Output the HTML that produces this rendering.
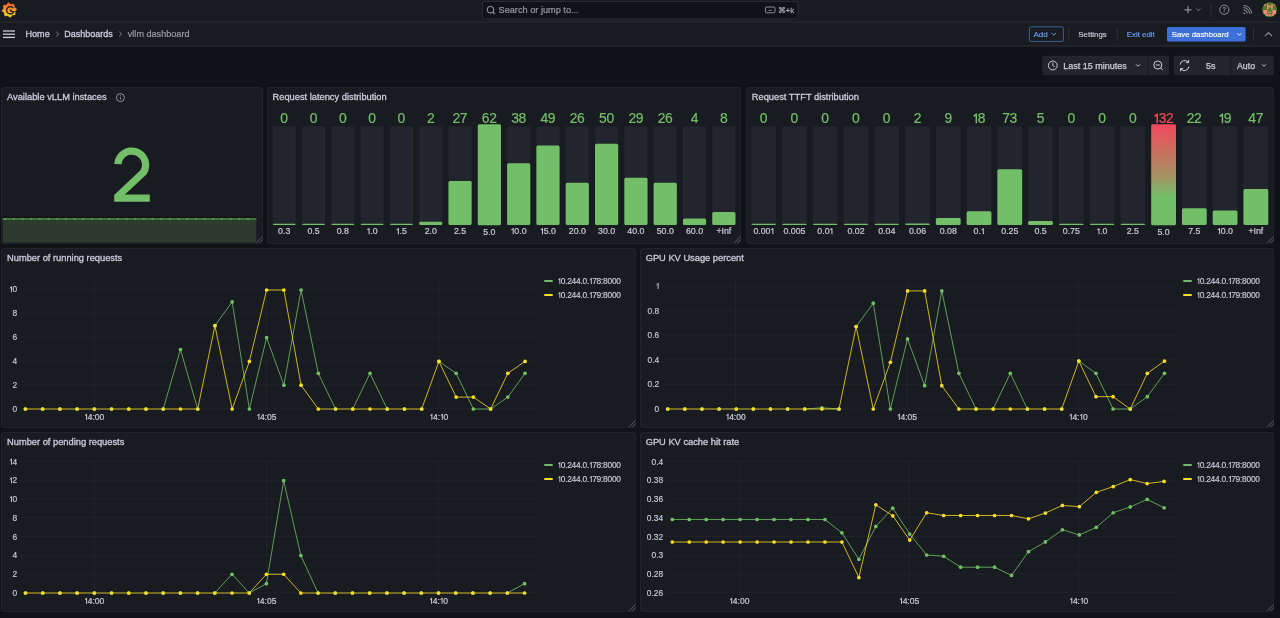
<!DOCTYPE html><html><head><meta charset="utf-8"><style>
html,body{margin:0;padding:0;width:1280px;height:618px;overflow:hidden;background:#111217;font-family:"Liberation Sans", sans-serif;}
.abs{position:absolute;}
.panel{position:absolute;background:#181b1f;border:1px solid rgba(204,204,220,0.05);border-radius:3px;box-sizing:border-box;}
svg text{font-family:"Liberation Sans", sans-serif;}
svg{will-change:transform;}

</style></head><body>
<div class="abs" style="left:0;top:0;width:1280px;height:47px;background:#181b1f"></div>
<div class="abs" style="left:0;top:21px;width:1280px;height:2px;background:rgba(204,204,220,0.05)"></div>
<div class="abs" style="left:0;top:45px;width:1280px;height:2px;background:rgba(204,204,220,0.05)"></div>
<div class="panel" style="left:1px;top:87px;width:262px;height:157px"></div>
<div class="panel" style="left:267px;top:87px;width:474px;height:157px"></div>
<div class="panel" style="left:746px;top:87px;width:528px;height:157px"></div>
<div class="panel" style="left:1px;top:248px;width:635px;height:180px"></div>
<div class="panel" style="left:640px;top:248px;width:634px;height:180px"></div>
<div class="panel" style="left:1px;top:432px;width:635px;height:180px"></div>
<div class="panel" style="left:640px;top:432px;width:634px;height:180px"></div>
<svg class="abs" style="left:0;top:0" width="1280" height="618" viewBox="0 0 1280 618">
<defs><linearGradient id="glogo" x1="0" y1="1" x2="0" y2="0"><stop offset="0" stop-color="#fbe02a"/><stop offset="0.55" stop-color="#f7942b"/><stop offset="1" stop-color="#f05a2a"/></linearGradient>
<linearGradient id="redgrad" x1="0" y1="0" x2="0" y2="1"><stop offset="0" stop-color="#f2495c"/><stop offset="0.5" stop-color="#a89063"/><stop offset="0.72" stop-color="#73bf69"/><stop offset="1" stop-color="#73bf69"/></linearGradient></defs>
<polygon points="8.40,2.66 9.78,3.52 10.80,4.60 12.23,4.20 13.86,4.17 14.22,5.76 14.17,7.24 15.47,7.96 16.64,9.10 15.78,10.48 14.70,11.50 15.10,12.93 15.13,14.56 13.54,14.92 12.06,14.87 11.34,16.17 10.20,17.34 8.82,16.48 7.80,15.40 6.37,15.80 4.74,15.83 4.38,14.24 4.43,12.76 3.13,12.04 1.96,10.90 2.82,9.52 3.90,8.50 3.50,7.07 3.47,5.44 5.06,5.08 6.54,5.13 7.26,3.83" fill="url(#glogo)" stroke="url(#glogo)" stroke-width="0.6" stroke-linejoin="round"/>
<path d="M13.33,8.18 A3.7,3.7 0 1 0 13.65,11.86 Q12.3,11.7 11.0,10.7" stroke="#1a1c20" stroke-width="1.3" fill="none"/>
<circle cx="10.6" cy="10.5" r="0.95" fill="#1a1c20"/>
<rect x="482.5" y="1.5" width="315.5" height="17.5" rx="2" fill="#111217" stroke="rgba(204,204,220,0.12)" stroke-width="1"/>
<circle cx="490.5" cy="9.7" r="3.2" stroke="rgba(204,204,220,0.65)" stroke-width="1.1" fill="none"/><line x1="492.8" y1="12" x2="495" y2="14.2" stroke="rgba(204,204,220,0.65)" stroke-width="1.1"/>
<text x="498.5" y="13.3" font-size="9.2" fill="rgba(204,204,220,0.65)" font-weight="normal" text-anchor="start" stroke="rgba(204,204,220,0.65)" stroke-width="0.2" >Search or jump to...</text>
<rect x="765.5" y="7" width="9.5" height="5.8" rx="1.2" stroke="rgba(204,204,220,0.65)" stroke-width="1" fill="none"/><line x1="768.5" y1="10.4" x2="772" y2="10.4" stroke="rgba(204,204,220,0.65)" stroke-width="0.8"/>
<text x="777.5" y="13" font-size="8" fill="rgba(204,204,220,0.65)" font-weight="normal" text-anchor="start" stroke="rgba(204,204,220,0.65)" stroke-width="0.3" >⌘+k</text>
<path d="M1188,6.3 V13.3 M1184.5,9.8 H1191.5" stroke="rgba(204,204,220,0.65)" stroke-width="1.2"/>
<path d="M1196.3,8.6 L1198.3,10.6 L1200.3,8.6" stroke="rgba(204,204,220,0.65)" stroke-width="0.9" fill="none"/>
<line x1="1211" y1="3" x2="1211" y2="17" stroke="rgba(204,204,220,0.12)" stroke-width="1"/>
<circle cx="1224.3" cy="9.7" r="4.6" stroke="rgba(204,204,220,0.65)" stroke-width="1" fill="none"/>
<text x="1224.3" y="12.2" font-size="6.5" fill="rgba(204,204,220,0.65)" font-weight="bold" text-anchor="middle" >?</text>
<circle cx="1244.3" cy="13.3" r="0.9" fill="rgba(204,204,220,0.65)"/><path d="M1243.5,9.8 a3.8,3.8 0 0 1 3.8,3.8 M1243.5,7.6 a6,6 0 0 1 6,6 M1243.5,5.5 a8,8 0 0 1 8,8" stroke="rgba(204,204,220,0.65)" stroke-width="1" fill="none"/>
<clipPath id="avc"><circle cx="1269.6" cy="9.7" r="7.4"/></clipPath>
<g clip-path="url(#avc)"><rect x="1262" y="2" width="16" height="16" fill="#4b7d22"/><rect x="1264" y="3.9" width="1.8" height="1.8" fill="#f2877f"/><rect x="1274" y="3.9" width="1.8" height="1.8" fill="#f2877f"/><rect x="1267" y="3.9" width="1.4" height="5.8" fill="#f2877f"/><rect x="1271.4" y="3.9" width="1.4" height="5.8" fill="#f2877f"/><rect x="1267" y="5.7" width="5.8" height="1.6" fill="#f2877f"/><rect x="1263.6" y="10" width="3.7" height="4.1" fill="#f2877f"/><rect x="1265.8" y="14.1" width="2.3" height="1.8" fill="#f2877f"/><rect x="1272.4" y="10" width="3.6" height="4.1" fill="#f2877f"/><rect x="1271.5" y="14.1" width="2.3" height="1.8" fill="#f2877f"/><rect x="1268.3" y="11.6" width="2.8" height="1.3" fill="#f2877f"/><rect x="1268.3" y="14.2" width="2.8" height="1.6" fill="#f2877f"/></g>
<line x1="3" y1="31" x2="15" y2="31" stroke="#ccccdc" stroke-width="1.3"/>
<line x1="3" y1="34.2" x2="15" y2="34.2" stroke="#ccccdc" stroke-width="1.3"/>
<line x1="3" y1="37.4" x2="15" y2="37.4" stroke="#ccccdc" stroke-width="1.3"/>
<text x="25.5" y="37.3" font-size="9.1" fill="#ccccdc" font-weight="normal" text-anchor="start" stroke="#ccccdc" stroke-width="0.3" >Home</text>
<path d="M56.3,31.8 L58.6,34 L56.3,36.2" stroke="rgba(204,204,220,0.65)" stroke-width="0.9" fill="none"/>
<text x="64.3" y="37.3" font-size="9.0" fill="#ccccdc" font-weight="normal" text-anchor="start" stroke="#ccccdc" stroke-width="0.3" >Dashboards</text>
<path d="M119.3,31.8 L121.6,34 L119.3,36.2" stroke="rgba(204,204,220,0.65)" stroke-width="0.9" fill="none"/>
<text x="127.8" y="37.3" font-size="9.1" fill="rgba(204,204,220,0.65)" font-weight="normal" text-anchor="start" stroke="rgba(204,204,220,0.65)" stroke-width="0.2" >vllm dashboard</text>
<rect x="1029.4" y="26.8" width="34" height="14.6" rx="1.5" fill="none" stroke="#3d5f94" stroke-width="1"/>
<text x="1033.5" y="36.6" font-size="8.0" fill="#6e9fff" font-weight="normal" text-anchor="start" stroke="#6e9fff" stroke-width="0.15" >Add</text>
<path d="M1051.6,33 L1053.8,35.2 L1056,33" stroke="#6e9fff" stroke-width="0.9" fill="none"/>
<line x1="1068.8" y1="27" x2="1068.8" y2="41" stroke="rgba(204,204,220,0.12)"/>
<text x="1078.3" y="36.5" font-size="7.9" fill="#ccccdc" font-weight="normal" text-anchor="start" stroke="#ccccdc" stroke-width="0.15" >Settings</text>
<line x1="1117.3" y1="27" x2="1117.3" y2="41" stroke="rgba(204,204,220,0.12)"/>
<text x="1126.7" y="36.6" font-size="7.9" fill="#6e9fff" font-weight="normal" text-anchor="start" stroke="#6e9fff" stroke-width="0.15" >Exit edit</text>
<rect x="1167" y="27" width="78.6" height="14.4" rx="1.5" fill="#3d71d9"/>
<text x="1171.8" y="36.6" font-size="7.8" fill="#ffffff" font-weight="normal" text-anchor="start" stroke="#ffffff" stroke-width="0.15" >Save dashboard</text>
<path d="M1237.4,33.4 L1239.3,35.3 L1241.2,33.4" stroke="#ffffff" stroke-width="0.9" fill="none"/>
<line x1="1253.5" y1="27" x2="1253.5" y2="41" stroke="rgba(204,204,220,0.12)"/>
<path d="M1265,36 L1268.5,32.5 L1272,36" stroke="rgba(204,204,220,0.65)" stroke-width="1.1" fill="none"/>
<rect x="1042.3" y="55.7" width="126.7" height="19.6" rx="2" fill="#22252b"/>
<line x1="1148.3" y1="55.7" x2="1148.3" y2="75.3" stroke="#181b1f" stroke-width="1"/>
<circle cx="1052.8" cy="65.5" r="4.4" stroke="#ccccdc" stroke-width="1" fill="none"/><path d="M1052.8,62.6 V65.5 L1054.8,66.8" stroke="#ccccdc" stroke-width="0.9" fill="none"/>
<text x="1063.3" y="69" font-size="9.0" fill="#ccccdc" font-weight="normal" text-anchor="start" stroke="#ccccdc" stroke-width="0.25" >Last 15 minutes</text>
<path d="M1136,64.3 L1138,66.3 L1140,64.3" stroke="#ccccdc" stroke-width="0.9" fill="none"/>
<circle cx="1157.8" cy="65" r="4" stroke="#ccccdc" stroke-width="1" fill="none"/><line x1="1160.6" y1="67.8" x2="1162.8" y2="70" stroke="#ccccdc" stroke-width="1"/><line x1="1155.8" y1="65" x2="1159.8" y2="65" stroke="#ccccdc" stroke-width="1"/>
<rect x="1173.8" y="55.7" width="99.9" height="19.6" rx="2" fill="#22252b"/>
<line x1="1231" y1="55.7" x2="1231" y2="75.3" stroke="#181b1f" stroke-width="1"/>
<path d="M1180.2,64.6 A4.6,4.6 0 0 1 1188.3,62.2 M1188.9,66.6 A4.6,4.6 0 0 1 1180.8,69 M1188.6,59.9 V62.6 H1185.9 M1180.5,71.3 V68.6 H1183.2" stroke="#ccccdc" stroke-width="1" fill="none"/>
<text x="1210.8" y="69" font-size="9.0" fill="#ccccdc" font-weight="normal" text-anchor="middle" stroke="#ccccdc" stroke-width="0.25" >5s</text>
<text x="1237" y="69" font-size="8.8" fill="#ccccdc" font-weight="normal" text-anchor="start" stroke="#ccccdc" stroke-width="0.25" >Auto</text>
<path d="M1262,64.3 L1264,66.3 L1266,64.3" stroke="#ccccdc" stroke-width="0.9" fill="none"/>
<path d="M256.30,242.70 L262.50,236.50 M259.40,242.70 L262.70,239.40" stroke="rgba(204,204,220,0.5)" stroke-width="0.7"/>
<path d="M734.30,242.70 L740.50,236.50 M737.40,242.70 L740.70,239.40" stroke="rgba(204,204,220,0.5)" stroke-width="0.7"/>
<path d="M1267.30,242.70 L1273.50,236.50 M1270.40,242.70 L1273.70,239.40" stroke="rgba(204,204,220,0.5)" stroke-width="0.7"/>
<path d="M629.30,426.70 L635.50,420.50 M632.40,426.70 L635.70,423.40" stroke="rgba(204,204,220,0.5)" stroke-width="0.7"/>
<path d="M1267.30,426.70 L1273.50,420.50 M1270.40,426.70 L1273.70,423.40" stroke="rgba(204,204,220,0.5)" stroke-width="0.7"/>
<path d="M629.30,610.70 L635.50,604.50 M632.40,610.70 L635.70,607.40" stroke="rgba(204,204,220,0.5)" stroke-width="0.7"/>
<path d="M1267.30,610.70 L1273.50,604.50 M1270.40,610.70 L1273.70,607.40" stroke="rgba(204,204,220,0.5)" stroke-width="0.7"/>
<text x="7" y="100.3" font-size="9.3" fill="#ccccdc" font-weight="normal" text-anchor="start" stroke="#ccccdc" stroke-width="0.3" >Available vLLM instaces</text>
<circle cx="120.4" cy="97.6" r="4.0" stroke="rgba(204,204,220,0.65)" stroke-width="1" fill="none"/><line x1="120.4" y1="97.3" x2="120.4" y2="99.6" stroke="rgba(204,204,220,0.65)" stroke-width="1"/><circle cx="120.4" cy="95.8" r="0.6" fill="rgba(204,204,220,0.65)"/>
<text x="272.5" y="100.3" font-size="9.3" fill="#ccccdc" font-weight="normal" text-anchor="start" stroke="#ccccdc" stroke-width="0.3" >Request latency distribution</text>
<text x="751.8" y="100.3" font-size="9.3" fill="#ccccdc" font-weight="normal" text-anchor="start" stroke="#ccccdc" stroke-width="0.3" >Request TTFT distribution</text>
<text x="7" y="260.9" font-size="9.3" fill="#ccccdc" font-weight="normal" text-anchor="start" stroke="#ccccdc" stroke-width="0.3" >Number of running requests</text>
<text x="645.7" y="260.9" font-size="9.3" fill="#ccccdc" font-weight="normal" text-anchor="start" stroke="#ccccdc" stroke-width="0.3" >GPU KV Usage percent</text>
<text x="7" y="444.9" font-size="9.3" fill="#ccccdc" font-weight="normal" text-anchor="start" stroke="#ccccdc" stroke-width="0.3" >Number of pending requests</text>
<text x="645.7" y="444.9" font-size="9.3" fill="#ccccdc" font-weight="normal" text-anchor="start" stroke="#ccccdc" stroke-width="0.3" >GPU KV cache hit rate</text>
<rect x="2.7" y="219" width="253.6" height="23.6" fill="#2c3b2e"/>
<line x1="2.7" y1="217.2" x2="256.3" y2="217.2" stroke="rgba(0,0,0,0.35)" stroke-width="1"/>
<line x1="2.7" y1="219" x2="256.3" y2="219" stroke="#44733f" stroke-width="2"/>
<circle cx="5.20" cy="219" r="1.1" fill="#5f9c59"/><circle cx="13.87" cy="219" r="1.1" fill="#5f9c59"/><circle cx="22.54" cy="219" r="1.1" fill="#5f9c59"/><circle cx="31.21" cy="219" r="1.1" fill="#5f9c59"/><circle cx="39.88" cy="219" r="1.1" fill="#5f9c59"/><circle cx="48.55" cy="219" r="1.1" fill="#5f9c59"/><circle cx="57.22" cy="219" r="1.1" fill="#5f9c59"/><circle cx="65.89" cy="219" r="1.1" fill="#5f9c59"/><circle cx="74.56" cy="219" r="1.1" fill="#5f9c59"/><circle cx="83.23" cy="219" r="1.1" fill="#5f9c59"/><circle cx="91.90" cy="219" r="1.1" fill="#5f9c59"/><circle cx="100.57" cy="219" r="1.1" fill="#5f9c59"/><circle cx="109.24" cy="219" r="1.1" fill="#5f9c59"/><circle cx="117.91" cy="219" r="1.1" fill="#5f9c59"/><circle cx="126.58" cy="219" r="1.1" fill="#5f9c59"/><circle cx="135.25" cy="219" r="1.1" fill="#5f9c59"/><circle cx="143.92" cy="219" r="1.1" fill="#5f9c59"/><circle cx="152.59" cy="219" r="1.1" fill="#5f9c59"/><circle cx="161.26" cy="219" r="1.1" fill="#5f9c59"/><circle cx="169.93" cy="219" r="1.1" fill="#5f9c59"/><circle cx="178.60" cy="219" r="1.1" fill="#5f9c59"/><circle cx="187.27" cy="219" r="1.1" fill="#5f9c59"/><circle cx="195.94" cy="219" r="1.1" fill="#5f9c59"/><circle cx="204.61" cy="219" r="1.1" fill="#5f9c59"/><circle cx="213.28" cy="219" r="1.1" fill="#5f9c59"/><circle cx="221.95" cy="219" r="1.1" fill="#5f9c59"/><circle cx="230.62" cy="219" r="1.1" fill="#5f9c59"/><circle cx="239.29" cy="219" r="1.1" fill="#5f9c59"/><circle cx="247.96" cy="219" r="1.1" fill="#5f9c59"/>
<path d="M114.23,163.88 A17.55,17.55 0 1 1 146.63,174.25 L125.0,194.4 L149.8,194.4 L149.8,201.7 L114.2,201.7 L114.2,195.0 L140.40,170.36 A10.2,10.2 0 1 0 121.57,164.33 Z" fill="#73bf69"/>
<rect x="272.60" y="126.3" width="23.2" height="98.60" rx="1.5" fill="#22252d"/>
<rect x="272.60" y="223.70" width="23.2" height="1.20" rx="1.5" fill="#73bf69"/>
<text x="280.33" y="123.2" font-size="13.9" fill="#73bf69" stroke="#73bf69" stroke-width="0.2" letter-spacing="0">0</text>
<text x="278.08" y="234.2" font-size="8.8" fill="#ccccdc" stroke="#ccccdc" stroke-width="0.2" letter-spacing="0.0">0.3</text>
<rect x="301.91" y="126.3" width="23.2" height="98.60" rx="1.5" fill="#22252d"/>
<rect x="301.91" y="223.70" width="23.2" height="1.20" rx="1.5" fill="#73bf69"/>
<text x="309.64" y="123.2" font-size="13.9" fill="#73bf69" stroke="#73bf69" stroke-width="0.2" letter-spacing="0">0</text>
<text x="307.39" y="234.2" font-size="8.8" fill="#ccccdc" stroke="#ccccdc" stroke-width="0.2" letter-spacing="0.0">0.5</text>
<rect x="331.22" y="126.3" width="23.2" height="98.60" rx="1.5" fill="#22252d"/>
<rect x="331.22" y="223.70" width="23.2" height="1.20" rx="1.5" fill="#73bf69"/>
<text x="338.95" y="123.2" font-size="13.9" fill="#73bf69" stroke="#73bf69" stroke-width="0.2" letter-spacing="0">0</text>
<text x="336.70" y="234.2" font-size="8.8" fill="#ccccdc" stroke="#ccccdc" stroke-width="0.2" letter-spacing="0.0">0.8</text>
<rect x="360.53" y="126.3" width="23.2" height="98.60" rx="1.5" fill="#22252d"/>
<rect x="360.53" y="223.70" width="23.2" height="1.20" rx="1.5" fill="#73bf69"/>
<text x="368.26" y="123.2" font-size="13.9" fill="#73bf69" stroke="#73bf69" stroke-width="0.2" letter-spacing="0">0</text>
<path d="M369.08,228.15 V234.20 M369.38,228.35 L367.36,229.91" stroke="#ccccdc" stroke-width="1.02" fill="none"/><text x="370.22" y="234.2" font-size="8.8" fill="#ccccdc" stroke="#ccccdc" stroke-width="0.2" letter-spacing="0.0">.0</text>
<rect x="389.84" y="126.3" width="23.2" height="98.60" rx="1.5" fill="#22252d"/>
<rect x="389.84" y="223.70" width="23.2" height="1.20" rx="1.5" fill="#73bf69"/>
<text x="397.57" y="123.2" font-size="13.9" fill="#73bf69" stroke="#73bf69" stroke-width="0.2" letter-spacing="0">0</text>
<path d="M398.39,228.15 V234.20 M398.69,228.35 L396.67,229.91" stroke="#ccccdc" stroke-width="1.02" fill="none"/><text x="399.53" y="234.2" font-size="8.8" fill="#ccccdc" stroke="#ccccdc" stroke-width="0.2" letter-spacing="0.0">.5</text>
<rect x="419.15" y="126.3" width="23.2" height="98.60" rx="1.5" fill="#22252d"/>
<rect x="419.15" y="221.65" width="23.2" height="3.25" rx="1.5" fill="#73bf69"/>
<text x="426.88" y="123.2" font-size="13.9" fill="#73bf69" stroke="#73bf69" stroke-width="0.2" letter-spacing="0">2</text>
<text x="424.63" y="234.2" font-size="8.8" fill="#ccccdc" stroke="#ccccdc" stroke-width="0.2" letter-spacing="0.0">2.0</text>
<rect x="448.46" y="126.3" width="23.2" height="98.60" rx="1.5" fill="#22252d"/>
<rect x="448.46" y="181.09" width="23.2" height="43.81" rx="1.5" fill="#73bf69"/>
<text x="452.53" y="123.2" font-size="13.9" fill="#73bf69" stroke="#73bf69" stroke-width="0.2" letter-spacing="-0.4">27</text>
<text x="453.94" y="234.2" font-size="8.8" fill="#ccccdc" stroke="#ccccdc" stroke-width="0.2" letter-spacing="0.0">2.5</text>
<rect x="477.77" y="126.3" width="23.2" height="98.60" rx="1.5" fill="#22252d"/>
<rect x="477.77" y="124.30" width="23.2" height="100.90" rx="1.5" fill="#73bf69"/>
<text x="481.84" y="123.2" font-size="13.9" fill="#73bf69" stroke="#73bf69" stroke-width="0.2" letter-spacing="-0.4">62</text>
<text x="483.25" y="234.5" font-size="8.8" fill="#ccccdc" stroke="#ccccdc" stroke-width="0.2" letter-spacing="0.0">5.0</text>
<rect x="507.08" y="126.3" width="23.2" height="98.60" rx="1.5" fill="#22252d"/>
<rect x="507.08" y="163.24" width="23.2" height="61.66" rx="1.5" fill="#73bf69"/>
<text x="511.15" y="123.2" font-size="13.9" fill="#73bf69" stroke="#73bf69" stroke-width="0.2" letter-spacing="-0.4">38</text>
<path d="M513.18,228.15 V234.20 M513.48,228.35 L511.46,229.91" stroke="#ccccdc" stroke-width="1.02" fill="none"/><text x="514.32" y="234.2" font-size="8.8" fill="#ccccdc" stroke="#ccccdc" stroke-width="0.2" letter-spacing="0.0">0.0</text>
<rect x="536.39" y="126.3" width="23.2" height="98.60" rx="1.5" fill="#22252d"/>
<rect x="536.39" y="145.39" width="23.2" height="79.51" rx="1.5" fill="#73bf69"/>
<text x="540.46" y="123.2" font-size="13.9" fill="#73bf69" stroke="#73bf69" stroke-width="0.2" letter-spacing="-0.4">49</text>
<path d="M542.49,228.15 V234.20 M542.79,228.35 L540.77,229.91" stroke="#ccccdc" stroke-width="1.02" fill="none"/><text x="543.63" y="234.2" font-size="8.8" fill="#ccccdc" stroke="#ccccdc" stroke-width="0.2" letter-spacing="0.0">5.0</text>
<rect x="565.70" y="126.3" width="23.2" height="98.60" rx="1.5" fill="#22252d"/>
<rect x="565.70" y="182.71" width="23.2" height="42.19" rx="1.5" fill="#73bf69"/>
<text x="569.77" y="123.2" font-size="13.9" fill="#73bf69" stroke="#73bf69" stroke-width="0.2" letter-spacing="-0.4">26</text>
<text x="568.74" y="234.2" font-size="8.8" fill="#ccccdc" stroke="#ccccdc" stroke-width="0.2" letter-spacing="0.0">20.0</text>
<rect x="595.01" y="126.3" width="23.2" height="98.60" rx="1.5" fill="#22252d"/>
<rect x="595.01" y="143.77" width="23.2" height="81.13" rx="1.5" fill="#73bf69"/>
<text x="599.08" y="123.2" font-size="13.9" fill="#73bf69" stroke="#73bf69" stroke-width="0.2" letter-spacing="-0.4">50</text>
<text x="598.05" y="234.2" font-size="8.8" fill="#ccccdc" stroke="#ccccdc" stroke-width="0.2" letter-spacing="0.0">30.0</text>
<rect x="624.32" y="126.3" width="23.2" height="98.60" rx="1.5" fill="#22252d"/>
<rect x="624.32" y="177.85" width="23.2" height="47.05" rx="1.5" fill="#73bf69"/>
<text x="628.39" y="123.2" font-size="13.9" fill="#73bf69" stroke="#73bf69" stroke-width="0.2" letter-spacing="-0.4">29</text>
<text x="627.36" y="234.2" font-size="8.8" fill="#ccccdc" stroke="#ccccdc" stroke-width="0.2" letter-spacing="0.0">40.0</text>
<rect x="653.63" y="126.3" width="23.2" height="98.60" rx="1.5" fill="#22252d"/>
<rect x="653.63" y="182.71" width="23.2" height="42.19" rx="1.5" fill="#73bf69"/>
<text x="657.70" y="123.2" font-size="13.9" fill="#73bf69" stroke="#73bf69" stroke-width="0.2" letter-spacing="-0.4">26</text>
<text x="656.67" y="234.2" font-size="8.8" fill="#ccccdc" stroke="#ccccdc" stroke-width="0.2" letter-spacing="0.0">50.0</text>
<rect x="682.94" y="126.3" width="23.2" height="98.60" rx="1.5" fill="#22252d"/>
<rect x="682.94" y="218.41" width="23.2" height="6.49" rx="1.5" fill="#73bf69"/>
<text x="690.67" y="123.2" font-size="13.9" fill="#73bf69" stroke="#73bf69" stroke-width="0.2" letter-spacing="0">4</text>
<text x="685.98" y="234.2" font-size="8.8" fill="#ccccdc" stroke="#ccccdc" stroke-width="0.2" letter-spacing="0.0">60.0</text>
<rect x="712.25" y="126.3" width="23.2" height="98.60" rx="1.5" fill="#22252d"/>
<rect x="712.25" y="211.92" width="23.2" height="12.98" rx="1.5" fill="#73bf69"/>
<text x="719.98" y="123.2" font-size="13.9" fill="#73bf69" stroke="#73bf69" stroke-width="0.2" letter-spacing="0">8</text>
<text x="716.39" y="234.2" font-size="8.8" fill="#ccccdc" stroke="#ccccdc" stroke-width="0.2" letter-spacing="0.0">+Inf</text>
<rect x="751.30" y="126.3" width="24.8" height="98.60" rx="1.5" fill="#22252d"/>
<rect x="751.30" y="223.70" width="24.8" height="1.20" rx="1.5" fill="#73bf69"/>
<text x="759.83" y="123.2" font-size="13.9" fill="#73bf69" stroke="#73bf69" stroke-width="0.2" letter-spacing="0">0</text>
<text x="753.38" y="234.2" font-size="8.8" fill="#ccccdc" stroke="#ccccdc" stroke-width="0.2" letter-spacing="0.0">0.00</text><path d="M772.88,228.15 V234.20 M773.19,228.35 L771.16,229.91" stroke="#ccccdc" stroke-width="1.02" fill="none"/>
<rect x="782.06" y="126.3" width="24.8" height="98.60" rx="1.5" fill="#22252d"/>
<rect x="782.06" y="223.70" width="24.8" height="1.20" rx="1.5" fill="#73bf69"/>
<text x="790.59" y="123.2" font-size="13.9" fill="#73bf69" stroke="#73bf69" stroke-width="0.2" letter-spacing="0">0</text>
<text x="783.45" y="234.2" font-size="8.8" fill="#ccccdc" stroke="#ccccdc" stroke-width="0.2" letter-spacing="0.0">0.005</text>
<rect x="812.82" y="126.3" width="24.8" height="98.60" rx="1.5" fill="#22252d"/>
<rect x="812.82" y="223.70" width="24.8" height="1.20" rx="1.5" fill="#73bf69"/>
<text x="821.35" y="123.2" font-size="13.9" fill="#73bf69" stroke="#73bf69" stroke-width="0.2" letter-spacing="0">0</text>
<text x="817.34" y="234.2" font-size="8.8" fill="#ccccdc" stroke="#ccccdc" stroke-width="0.2" letter-spacing="0.0">0.0</text><path d="M831.95,228.15 V234.20 M832.26,228.35 L830.24,229.91" stroke="#ccccdc" stroke-width="1.02" fill="none"/>
<rect x="843.58" y="126.3" width="24.8" height="98.60" rx="1.5" fill="#22252d"/>
<rect x="843.58" y="223.70" width="24.8" height="1.20" rx="1.5" fill="#73bf69"/>
<text x="852.11" y="123.2" font-size="13.9" fill="#73bf69" stroke="#73bf69" stroke-width="0.2" letter-spacing="0">0</text>
<text x="847.42" y="234.2" font-size="8.8" fill="#ccccdc" stroke="#ccccdc" stroke-width="0.2" letter-spacing="0.0">0.02</text>
<rect x="874.34" y="126.3" width="24.8" height="98.60" rx="1.5" fill="#22252d"/>
<rect x="874.34" y="223.70" width="24.8" height="1.20" rx="1.5" fill="#73bf69"/>
<text x="882.87" y="123.2" font-size="13.9" fill="#73bf69" stroke="#73bf69" stroke-width="0.2" letter-spacing="0">0</text>
<text x="878.18" y="234.2" font-size="8.8" fill="#ccccdc" stroke="#ccccdc" stroke-width="0.2" letter-spacing="0.0">0.04</text>
<rect x="905.10" y="126.3" width="24.8" height="98.60" rx="1.5" fill="#22252d"/>
<rect x="905.10" y="223.38" width="24.8" height="1.52" rx="1.5" fill="#73bf69"/>
<text x="913.63" y="123.2" font-size="13.9" fill="#73bf69" stroke="#73bf69" stroke-width="0.2" letter-spacing="0">2</text>
<text x="908.94" y="234.2" font-size="8.8" fill="#ccccdc" stroke="#ccccdc" stroke-width="0.2" letter-spacing="0.0">0.06</text>
<rect x="935.86" y="126.3" width="24.8" height="98.60" rx="1.5" fill="#22252d"/>
<rect x="935.86" y="218.04" width="24.8" height="6.86" rx="1.5" fill="#73bf69"/>
<text x="944.39" y="123.2" font-size="13.9" fill="#73bf69" stroke="#73bf69" stroke-width="0.2" letter-spacing="0">9</text>
<text x="939.70" y="234.2" font-size="8.8" fill="#ccccdc" stroke="#ccccdc" stroke-width="0.2" letter-spacing="0.0">0.08</text>
<rect x="966.62" y="126.3" width="24.8" height="98.60" rx="1.5" fill="#22252d"/>
<rect x="966.62" y="211.18" width="24.8" height="13.72" rx="1.5" fill="#73bf69"/>
<path d="M976.33,113.64 V123.20 M976.78,113.94 L973.62,116.42" stroke="#73bf69" stroke-width="1.49" fill="none"/><text x="977.73" y="123.2" font-size="13.9" fill="#73bf69" stroke="#73bf69" stroke-width="0.2" letter-spacing="-0.4">8</text>
<text x="973.59" y="234.2" font-size="8.8" fill="#ccccdc" stroke="#ccccdc" stroke-width="0.2" letter-spacing="0.0">0.</text><path d="M983.31,228.15 V234.20 M983.61,228.35 L981.59,229.91" stroke="#ccccdc" stroke-width="1.02" fill="none"/>
<rect x="997.38" y="126.3" width="24.8" height="98.60" rx="1.5" fill="#22252d"/>
<rect x="997.38" y="169.27" width="24.8" height="55.63" rx="1.5" fill="#73bf69"/>
<text x="1002.25" y="123.2" font-size="13.9" fill="#73bf69" stroke="#73bf69" stroke-width="0.2" letter-spacing="-0.4">73</text>
<text x="1001.22" y="234.2" font-size="8.8" fill="#ccccdc" stroke="#ccccdc" stroke-width="0.2" letter-spacing="0.0">0.25</text>
<rect x="1028.14" y="126.3" width="24.8" height="98.60" rx="1.5" fill="#22252d"/>
<rect x="1028.14" y="221.09" width="24.8" height="3.81" rx="1.5" fill="#73bf69"/>
<text x="1036.67" y="123.2" font-size="13.9" fill="#73bf69" stroke="#73bf69" stroke-width="0.2" letter-spacing="0">5</text>
<text x="1034.42" y="234.2" font-size="8.8" fill="#ccccdc" stroke="#ccccdc" stroke-width="0.2" letter-spacing="0.0">0.5</text>
<rect x="1058.90" y="126.3" width="24.8" height="98.60" rx="1.5" fill="#22252d"/>
<rect x="1058.90" y="223.70" width="24.8" height="1.20" rx="1.5" fill="#73bf69"/>
<text x="1067.43" y="123.2" font-size="13.9" fill="#73bf69" stroke="#73bf69" stroke-width="0.2" letter-spacing="0">0</text>
<text x="1062.74" y="234.2" font-size="8.8" fill="#ccccdc" stroke="#ccccdc" stroke-width="0.2" letter-spacing="0.0">0.75</text>
<rect x="1089.66" y="126.3" width="24.8" height="98.60" rx="1.5" fill="#22252d"/>
<rect x="1089.66" y="223.70" width="24.8" height="1.20" rx="1.5" fill="#73bf69"/>
<text x="1098.19" y="123.2" font-size="13.9" fill="#73bf69" stroke="#73bf69" stroke-width="0.2" letter-spacing="0">0</text>
<path d="M1099.01,228.15 V234.20 M1099.31,228.35 L1097.29,229.91" stroke="#ccccdc" stroke-width="1.02" fill="none"/><text x="1100.15" y="234.2" font-size="8.8" fill="#ccccdc" stroke="#ccccdc" stroke-width="0.2" letter-spacing="0.0">.0</text>
<rect x="1120.42" y="126.3" width="24.8" height="98.60" rx="1.5" fill="#22252d"/>
<rect x="1120.42" y="223.70" width="24.8" height="1.20" rx="1.5" fill="#73bf69"/>
<text x="1128.95" y="123.2" font-size="13.9" fill="#73bf69" stroke="#73bf69" stroke-width="0.2" letter-spacing="0">0</text>
<text x="1126.70" y="234.2" font-size="8.8" fill="#ccccdc" stroke="#ccccdc" stroke-width="0.2" letter-spacing="0.0">2.5</text>
<rect x="1151.18" y="126.3" width="24.8" height="98.60" rx="1.5" fill="#22252d"/>
<rect x="1151.18" y="124.30" width="24.8" height="100.90" rx="1.5" fill="url(#redgrad)"/>
<path d="M1157.22,113.64 V123.20 M1157.67,113.94 L1154.51,116.42" stroke="#f2495c" stroke-width="1.49" fill="none"/><text x="1158.63" y="123.2" font-size="13.9" fill="#f2495c" stroke="#f2495c" stroke-width="0.2" letter-spacing="-0.4">32</text>
<text x="1157.46" y="234.5" font-size="8.8" fill="#ccccdc" stroke="#ccccdc" stroke-width="0.2" letter-spacing="0.0">5.0</text>
<rect x="1181.94" y="126.3" width="24.8" height="98.60" rx="1.5" fill="#22252d"/>
<rect x="1181.94" y="208.13" width="24.8" height="16.77" rx="1.5" fill="#73bf69"/>
<text x="1186.81" y="123.2" font-size="13.9" fill="#73bf69" stroke="#73bf69" stroke-width="0.2" letter-spacing="-0.4">22</text>
<text x="1188.22" y="234.2" font-size="8.8" fill="#ccccdc" stroke="#ccccdc" stroke-width="0.2" letter-spacing="0.0">7.5</text>
<rect x="1212.70" y="126.3" width="24.8" height="98.60" rx="1.5" fill="#22252d"/>
<rect x="1212.70" y="210.42" width="24.8" height="14.48" rx="1.5" fill="#73bf69"/>
<path d="M1222.41,113.64 V123.20 M1222.86,113.94 L1219.70,116.42" stroke="#73bf69" stroke-width="1.49" fill="none"/><text x="1223.81" y="123.2" font-size="13.9" fill="#73bf69" stroke="#73bf69" stroke-width="0.2" letter-spacing="-0.4">9</text>
<path d="M1219.60,228.15 V234.20 M1219.90,228.35 L1217.88,229.91" stroke="#ccccdc" stroke-width="1.02" fill="none"/><text x="1220.74" y="234.2" font-size="8.8" fill="#ccccdc" stroke="#ccccdc" stroke-width="0.2" letter-spacing="0.0">0.0</text>
<rect x="1243.46" y="126.3" width="24.8" height="98.60" rx="1.5" fill="#22252d"/>
<rect x="1243.46" y="189.08" width="24.8" height="35.82" rx="1.5" fill="#73bf69"/>
<text x="1248.33" y="123.2" font-size="13.9" fill="#73bf69" stroke="#73bf69" stroke-width="0.2" letter-spacing="-0.4">47</text>
<text x="1248.40" y="234.2" font-size="8.8" fill="#ccccdc" stroke="#ccccdc" stroke-width="0.2" letter-spacing="0.0">+Inf</text>
<line x1="20" y1="408.80" x2="537" y2="408.80" stroke="rgba(204,204,220,0.045)" stroke-width="1"/>
<text x="12.53" y="411.80" font-size="8.4" fill="#ccccdc" stroke="#ccccdc" stroke-width="0.15" letter-spacing="0.0">0</text>
<line x1="20" y1="384.90" x2="537" y2="384.90" stroke="rgba(204,204,220,0.045)" stroke-width="1"/>
<text x="12.53" y="387.90" font-size="8.4" fill="#ccccdc" stroke="#ccccdc" stroke-width="0.15" letter-spacing="0.0">2</text>
<line x1="20" y1="361.00" x2="537" y2="361.00" stroke="rgba(204,204,220,0.045)" stroke-width="1"/>
<text x="12.53" y="364.00" font-size="8.4" fill="#ccccdc" stroke="#ccccdc" stroke-width="0.15" letter-spacing="0.0">4</text>
<line x1="20" y1="337.10" x2="537" y2="337.10" stroke="rgba(204,204,220,0.045)" stroke-width="1"/>
<text x="12.53" y="340.10" font-size="8.4" fill="#ccccdc" stroke="#ccccdc" stroke-width="0.15" letter-spacing="0.0">6</text>
<line x1="20" y1="313.20" x2="537" y2="313.20" stroke="rgba(204,204,220,0.045)" stroke-width="1"/>
<text x="12.53" y="316.20" font-size="8.4" fill="#ccccdc" stroke="#ccccdc" stroke-width="0.15" letter-spacing="0.0">8</text>
<line x1="20" y1="289.30" x2="537" y2="289.30" stroke="rgba(204,204,220,0.045)" stroke-width="1"/>
<path d="M11.44,286.52 V292.30 M11.72,286.71 L9.80,288.20" stroke="#ccccdc" stroke-width="0.93" fill="none"/><text x="12.53" y="292.30" font-size="8.4" fill="#ccccdc" stroke="#ccccdc" stroke-width="0.15" letter-spacing="0.0">0</text>
<line x1="94.30" y1="278" x2="94.30" y2="409" stroke="rgba(204,204,220,0.045)" stroke-width="1"/>
<path d="M86.62,413.95 V419.80 M86.92,414.15 L84.97,415.65" stroke="#ccccdc" stroke-width="0.99" fill="none"/><text x="87.73" y="419.8" font-size="8.5" fill="#ccccdc" stroke="#ccccdc" stroke-width="0.2" letter-spacing="0.0">4:00</text>
<line x1="266.60" y1="278" x2="266.60" y2="409" stroke="rgba(204,204,220,0.045)" stroke-width="1"/>
<path d="M258.92,413.95 V419.80 M259.22,414.15 L257.27,415.65" stroke="#ccccdc" stroke-width="0.99" fill="none"/><text x="260.03" y="419.8" font-size="8.5" fill="#ccccdc" stroke="#ccccdc" stroke-width="0.2" letter-spacing="0.0">4:05</text>
<line x1="438.90" y1="278" x2="438.90" y2="409" stroke="rgba(204,204,220,0.045)" stroke-width="1"/>
<path d="M431.89,413.95 V419.80 M432.18,414.15 L430.23,415.65" stroke="#ccccdc" stroke-width="0.99" fill="none"/><text x="432.99" y="419.8" font-size="8.5" fill="#ccccdc" stroke="#ccccdc" stroke-width="0.2" letter-spacing="0.0">4:</text><path d="M442.38,413.95 V419.80 M442.67,414.15 L440.72,415.65" stroke="#ccccdc" stroke-width="0.99" fill="none"/><text x="443.48" y="419.8" font-size="8.5" fill="#ccccdc" stroke="#ccccdc" stroke-width="0.2" letter-spacing="0.0">0</text>
<path d="M163.24,409.00 L180.47,349.50 L197.70,409.00 M214.93,325.70 L232.16,301.90 L249.39,409.00 L266.62,337.60 L283.85,385.20 L301.08,290.00 L318.31,373.30 L335.54,409.00 M352.77,409.00 L370.00,373.30 L387.23,409.00 M438.92,361.40 L456.15,373.30 L473.38,409.00 L490.61,409.00 L507.84,397.10 L525.07,373.30 " fill="none" stroke="#73bf69" stroke-width="0.8" stroke-linejoin="round"/>
<path d="M25.40,409.00 L42.63,409.00 L59.86,409.00 L77.09,409.00 L94.32,409.00 L111.55,409.00 L128.78,409.00 L146.01,409.00 L163.24,409.00 L180.47,409.00 L197.70,409.00 L214.93,325.70 L232.16,409.00 L249.39,361.40 L266.62,290.00 L283.85,290.00 L301.08,385.20 L318.31,409.00 L335.54,409.00 L352.77,409.00 L370.00,409.00 L387.23,409.00 L404.46,409.00 L421.69,409.00 L438.92,361.40 L456.15,397.10 L473.38,397.10 L490.61,409.00 L507.84,373.30 L525.07,361.40 " fill="none" stroke="#fade2a" stroke-width="0.8" stroke-linejoin="round"/>
<circle cx="25.40" cy="409.00" r="1.85" fill="#73bf69"/>
<circle cx="42.63" cy="409.00" r="1.85" fill="#73bf69"/>
<circle cx="59.86" cy="409.00" r="1.85" fill="#73bf69"/>
<circle cx="77.09" cy="409.00" r="1.85" fill="#73bf69"/>
<circle cx="94.32" cy="409.00" r="1.85" fill="#73bf69"/>
<circle cx="111.55" cy="409.00" r="1.85" fill="#73bf69"/>
<circle cx="128.78" cy="409.00" r="1.85" fill="#73bf69"/>
<circle cx="146.01" cy="409.00" r="1.85" fill="#73bf69"/>
<circle cx="163.24" cy="409.00" r="1.85" fill="#73bf69"/>
<circle cx="180.47" cy="349.50" r="1.85" fill="#73bf69"/>
<circle cx="197.70" cy="409.00" r="1.85" fill="#73bf69"/>
<circle cx="214.93" cy="325.70" r="1.85" fill="#73bf69"/>
<circle cx="232.16" cy="301.90" r="1.85" fill="#73bf69"/>
<circle cx="249.39" cy="409.00" r="1.85" fill="#73bf69"/>
<circle cx="266.62" cy="337.60" r="1.85" fill="#73bf69"/>
<circle cx="283.85" cy="385.20" r="1.85" fill="#73bf69"/>
<circle cx="301.08" cy="290.00" r="1.85" fill="#73bf69"/>
<circle cx="318.31" cy="373.30" r="1.85" fill="#73bf69"/>
<circle cx="335.54" cy="409.00" r="1.85" fill="#73bf69"/>
<circle cx="352.77" cy="409.00" r="1.85" fill="#73bf69"/>
<circle cx="370.00" cy="373.30" r="1.85" fill="#73bf69"/>
<circle cx="387.23" cy="409.00" r="1.85" fill="#73bf69"/>
<circle cx="404.46" cy="409.00" r="1.85" fill="#73bf69"/>
<circle cx="421.69" cy="409.00" r="1.85" fill="#73bf69"/>
<circle cx="438.92" cy="361.40" r="1.85" fill="#73bf69"/>
<circle cx="456.15" cy="373.30" r="1.85" fill="#73bf69"/>
<circle cx="473.38" cy="409.00" r="1.85" fill="#73bf69"/>
<circle cx="490.61" cy="409.00" r="1.85" fill="#73bf69"/>
<circle cx="507.84" cy="397.10" r="1.85" fill="#73bf69"/>
<circle cx="525.07" cy="373.30" r="1.85" fill="#73bf69"/>
<circle cx="25.40" cy="409.00" r="1.85" fill="#fade2a"/>
<circle cx="42.63" cy="409.00" r="1.85" fill="#fade2a"/>
<circle cx="59.86" cy="409.00" r="1.85" fill="#fade2a"/>
<circle cx="77.09" cy="409.00" r="1.85" fill="#fade2a"/>
<circle cx="94.32" cy="409.00" r="1.85" fill="#fade2a"/>
<circle cx="111.55" cy="409.00" r="1.85" fill="#fade2a"/>
<circle cx="128.78" cy="409.00" r="1.85" fill="#fade2a"/>
<circle cx="146.01" cy="409.00" r="1.85" fill="#fade2a"/>
<circle cx="163.24" cy="409.00" r="1.85" fill="#fade2a"/>
<circle cx="180.47" cy="409.00" r="1.85" fill="#fade2a"/>
<circle cx="197.70" cy="409.00" r="1.85" fill="#fade2a"/>
<circle cx="214.93" cy="325.70" r="1.85" fill="#fade2a"/>
<circle cx="232.16" cy="409.00" r="1.85" fill="#fade2a"/>
<circle cx="249.39" cy="361.40" r="1.85" fill="#fade2a"/>
<circle cx="266.62" cy="290.00" r="1.85" fill="#fade2a"/>
<circle cx="283.85" cy="290.00" r="1.85" fill="#fade2a"/>
<circle cx="301.08" cy="385.20" r="1.85" fill="#fade2a"/>
<circle cx="318.31" cy="409.00" r="1.85" fill="#fade2a"/>
<circle cx="335.54" cy="409.00" r="1.85" fill="#fade2a"/>
<circle cx="352.77" cy="409.00" r="1.85" fill="#fade2a"/>
<circle cx="370.00" cy="409.00" r="1.85" fill="#fade2a"/>
<circle cx="387.23" cy="409.00" r="1.85" fill="#fade2a"/>
<circle cx="404.46" cy="409.00" r="1.85" fill="#fade2a"/>
<circle cx="421.69" cy="409.00" r="1.85" fill="#fade2a"/>
<circle cx="438.92" cy="361.40" r="1.85" fill="#fade2a"/>
<circle cx="456.15" cy="397.10" r="1.85" fill="#fade2a"/>
<circle cx="473.38" cy="397.10" r="1.85" fill="#fade2a"/>
<circle cx="490.61" cy="409.00" r="1.85" fill="#fade2a"/>
<circle cx="507.84" cy="373.30" r="1.85" fill="#fade2a"/>
<circle cx="525.07" cy="361.40" r="1.85" fill="#fade2a"/>
<rect x="544" y="279.90" width="9" height="2.2" rx="1.1" fill="#73bf69"/>
<path d="M559.87,278.22 V284.00 M560.15,278.41 L558.23,279.90" stroke="#ccccdc" stroke-width="0.93" fill="none"/><text x="560.71" y="284.00" font-size="8.4" fill="#ccccdc" stroke="#ccccdc" stroke-width="0.15" letter-spacing="-0.25">0.244.0.</text><path d="M591.34,278.22 V284.00 M591.62,278.41 L589.70,279.90" stroke="#ccccdc" stroke-width="0.93" fill="none"/><text x="592.18" y="284.00" font-size="8.4" fill="#ccccdc" stroke="#ccccdc" stroke-width="0.15" letter-spacing="-0.25">78:8000</text>
<rect x="544" y="293.90" width="9" height="2.2" rx="1.1" fill="#fade2a"/>
<path d="M559.87,292.22 V298.00 M560.15,292.41 L558.23,293.90" stroke="#ccccdc" stroke-width="0.93" fill="none"/><text x="560.71" y="298.00" font-size="8.4" fill="#ccccdc" stroke="#ccccdc" stroke-width="0.15" letter-spacing="-0.25">0.244.0.</text><path d="M591.34,292.22 V298.00 M591.62,292.41 L589.70,293.90" stroke="#ccccdc" stroke-width="0.93" fill="none"/><text x="592.18" y="298.00" font-size="8.4" fill="#ccccdc" stroke="#ccccdc" stroke-width="0.15" letter-spacing="-0.25">79:8000</text>
<line x1="662" y1="409.00" x2="1176" y2="409.00" stroke="rgba(204,204,220,0.045)" stroke-width="1"/>
<text x="654.53" y="412.00" font-size="8.4" fill="#ccccdc" stroke="#ccccdc" stroke-width="0.15" letter-spacing="0.0">0</text>
<line x1="662" y1="384.40" x2="1176" y2="384.40" stroke="rgba(204,204,220,0.045)" stroke-width="1"/>
<text x="647.52" y="387.40" font-size="8.4" fill="#ccccdc" stroke="#ccccdc" stroke-width="0.15" letter-spacing="0.0">0.2</text>
<line x1="662" y1="359.80" x2="1176" y2="359.80" stroke="rgba(204,204,220,0.045)" stroke-width="1"/>
<text x="647.52" y="362.80" font-size="8.4" fill="#ccccdc" stroke="#ccccdc" stroke-width="0.15" letter-spacing="0.0">0.4</text>
<line x1="662" y1="335.20" x2="1176" y2="335.20" stroke="rgba(204,204,220,0.045)" stroke-width="1"/>
<text x="647.52" y="338.20" font-size="8.4" fill="#ccccdc" stroke="#ccccdc" stroke-width="0.15" letter-spacing="0.0">0.6</text>
<line x1="662" y1="310.60" x2="1176" y2="310.60" stroke="rgba(204,204,220,0.045)" stroke-width="1"/>
<text x="647.52" y="313.60" font-size="8.4" fill="#ccccdc" stroke="#ccccdc" stroke-width="0.15" letter-spacing="0.0">0.8</text>
<line x1="662" y1="286.00" x2="1176" y2="286.00" stroke="rgba(204,204,220,0.045)" stroke-width="1"/>
<path d="M658.11,283.22 V289.00 M658.39,283.41 L656.47,284.90" stroke="#ccccdc" stroke-width="0.93" fill="none"/>
<line x1="735.70" y1="278" x2="735.70" y2="409" stroke="rgba(204,204,220,0.045)" stroke-width="1"/>
<path d="M728.02,413.95 V419.80 M728.32,414.15 L726.37,415.65" stroke="#ccccdc" stroke-width="0.99" fill="none"/><text x="729.13" y="419.8" font-size="8.5" fill="#ccccdc" stroke="#ccccdc" stroke-width="0.2" letter-spacing="0.0">4:00</text>
<line x1="907.00" y1="278" x2="907.00" y2="409" stroke="rgba(204,204,220,0.045)" stroke-width="1"/>
<path d="M899.32,413.95 V419.80 M899.62,414.15 L897.67,415.65" stroke="#ccccdc" stroke-width="0.99" fill="none"/><text x="900.43" y="419.8" font-size="8.5" fill="#ccccdc" stroke="#ccccdc" stroke-width="0.2" letter-spacing="0.0">4:05</text>
<line x1="1078.30" y1="278" x2="1078.30" y2="409" stroke="rgba(204,204,220,0.045)" stroke-width="1"/>
<path d="M1071.29,413.95 V419.80 M1071.58,414.15 L1069.63,415.65" stroke="#ccccdc" stroke-width="0.99" fill="none"/><text x="1072.39" y="419.8" font-size="8.5" fill="#ccccdc" stroke="#ccccdc" stroke-width="0.2" letter-spacing="0.0">4:</text><path d="M1081.78,413.95 V419.80 M1082.07,414.15 L1080.12,415.65" stroke="#ccccdc" stroke-width="0.99" fill="none"/><text x="1082.88" y="419.8" font-size="8.5" fill="#ccccdc" stroke="#ccccdc" stroke-width="0.2" letter-spacing="0.0">0</text>
<path d="M804.74,409.00 L821.87,407.77 L839.00,409.00 M856.13,326.59 L873.26,303.22 L890.39,409.00 L907.52,338.89 L924.65,385.63 L941.78,290.92 L958.91,373.33 L976.04,409.00 M993.17,409.00 L1010.30,373.33 L1027.43,409.00 M1078.82,361.03 L1095.95,373.33 L1113.08,409.00 L1130.21,409.00 L1147.34,396.70 L1164.47,373.33 " fill="none" stroke="#73bf69" stroke-width="0.8" stroke-linejoin="round"/>
<path d="M667.70,409.00 L684.83,409.00 L701.96,409.00 L719.09,409.00 L736.22,409.00 L753.35,409.00 L770.48,409.00 L787.61,409.00 L804.74,409.00 L821.87,409.00 L839.00,409.00 L856.13,326.59 L873.26,409.00 L890.39,362.26 L907.52,290.92 L924.65,290.92 L941.78,385.63 L958.91,409.00 L976.04,409.00 L993.17,409.00 L1010.30,409.00 L1027.43,409.00 L1044.56,409.00 L1061.69,409.00 L1078.82,361.03 L1095.95,396.70 L1113.08,396.70 L1130.21,409.00 L1147.34,373.33 L1164.47,361.03 " fill="none" stroke="#fade2a" stroke-width="0.8" stroke-linejoin="round"/>
<circle cx="667.70" cy="409.00" r="1.85" fill="#73bf69"/>
<circle cx="684.83" cy="409.00" r="1.85" fill="#73bf69"/>
<circle cx="701.96" cy="409.00" r="1.85" fill="#73bf69"/>
<circle cx="719.09" cy="409.00" r="1.85" fill="#73bf69"/>
<circle cx="736.22" cy="409.00" r="1.85" fill="#73bf69"/>
<circle cx="753.35" cy="409.00" r="1.85" fill="#73bf69"/>
<circle cx="770.48" cy="409.00" r="1.85" fill="#73bf69"/>
<circle cx="787.61" cy="409.00" r="1.85" fill="#73bf69"/>
<circle cx="804.74" cy="409.00" r="1.85" fill="#73bf69"/>
<circle cx="821.87" cy="407.77" r="1.85" fill="#73bf69"/>
<circle cx="839.00" cy="409.00" r="1.85" fill="#73bf69"/>
<circle cx="856.13" cy="326.59" r="1.85" fill="#73bf69"/>
<circle cx="873.26" cy="303.22" r="1.85" fill="#73bf69"/>
<circle cx="890.39" cy="409.00" r="1.85" fill="#73bf69"/>
<circle cx="907.52" cy="338.89" r="1.85" fill="#73bf69"/>
<circle cx="924.65" cy="385.63" r="1.85" fill="#73bf69"/>
<circle cx="941.78" cy="290.92" r="1.85" fill="#73bf69"/>
<circle cx="958.91" cy="373.33" r="1.85" fill="#73bf69"/>
<circle cx="976.04" cy="409.00" r="1.85" fill="#73bf69"/>
<circle cx="993.17" cy="409.00" r="1.85" fill="#73bf69"/>
<circle cx="1010.30" cy="373.33" r="1.85" fill="#73bf69"/>
<circle cx="1027.43" cy="409.00" r="1.85" fill="#73bf69"/>
<circle cx="1044.56" cy="409.00" r="1.85" fill="#73bf69"/>
<circle cx="1061.69" cy="409.00" r="1.85" fill="#73bf69"/>
<circle cx="1078.82" cy="361.03" r="1.85" fill="#73bf69"/>
<circle cx="1095.95" cy="373.33" r="1.85" fill="#73bf69"/>
<circle cx="1113.08" cy="409.00" r="1.85" fill="#73bf69"/>
<circle cx="1130.21" cy="409.00" r="1.85" fill="#73bf69"/>
<circle cx="1147.34" cy="396.70" r="1.85" fill="#73bf69"/>
<circle cx="1164.47" cy="373.33" r="1.85" fill="#73bf69"/>
<circle cx="667.70" cy="409.00" r="1.85" fill="#fade2a"/>
<circle cx="684.83" cy="409.00" r="1.85" fill="#fade2a"/>
<circle cx="701.96" cy="409.00" r="1.85" fill="#fade2a"/>
<circle cx="719.09" cy="409.00" r="1.85" fill="#fade2a"/>
<circle cx="736.22" cy="409.00" r="1.85" fill="#fade2a"/>
<circle cx="753.35" cy="409.00" r="1.85" fill="#fade2a"/>
<circle cx="770.48" cy="409.00" r="1.85" fill="#fade2a"/>
<circle cx="787.61" cy="409.00" r="1.85" fill="#fade2a"/>
<circle cx="804.74" cy="409.00" r="1.85" fill="#fade2a"/>
<circle cx="821.87" cy="409.00" r="1.85" fill="#fade2a"/>
<circle cx="839.00" cy="409.00" r="1.85" fill="#fade2a"/>
<circle cx="856.13" cy="326.59" r="1.85" fill="#fade2a"/>
<circle cx="873.26" cy="409.00" r="1.85" fill="#fade2a"/>
<circle cx="890.39" cy="362.26" r="1.85" fill="#fade2a"/>
<circle cx="907.52" cy="290.92" r="1.85" fill="#fade2a"/>
<circle cx="924.65" cy="290.92" r="1.85" fill="#fade2a"/>
<circle cx="941.78" cy="385.63" r="1.85" fill="#fade2a"/>
<circle cx="958.91" cy="409.00" r="1.85" fill="#fade2a"/>
<circle cx="976.04" cy="409.00" r="1.85" fill="#fade2a"/>
<circle cx="993.17" cy="409.00" r="1.85" fill="#fade2a"/>
<circle cx="1010.30" cy="409.00" r="1.85" fill="#fade2a"/>
<circle cx="1027.43" cy="409.00" r="1.85" fill="#fade2a"/>
<circle cx="1044.56" cy="409.00" r="1.85" fill="#fade2a"/>
<circle cx="1061.69" cy="409.00" r="1.85" fill="#fade2a"/>
<circle cx="1078.82" cy="361.03" r="1.85" fill="#fade2a"/>
<circle cx="1095.95" cy="396.70" r="1.85" fill="#fade2a"/>
<circle cx="1113.08" cy="396.70" r="1.85" fill="#fade2a"/>
<circle cx="1130.21" cy="409.00" r="1.85" fill="#fade2a"/>
<circle cx="1147.34" cy="373.33" r="1.85" fill="#fade2a"/>
<circle cx="1164.47" cy="361.03" r="1.85" fill="#fade2a"/>
<rect x="1183" y="279.90" width="9" height="2.2" rx="1.1" fill="#73bf69"/>
<path d="M1198.87,278.22 V284.00 M1199.15,278.41 L1197.23,279.90" stroke="#ccccdc" stroke-width="0.93" fill="none"/><text x="1199.71" y="284.00" font-size="8.4" fill="#ccccdc" stroke="#ccccdc" stroke-width="0.15" letter-spacing="-0.25">0.244.0.</text><path d="M1230.34,278.22 V284.00 M1230.62,278.41 L1228.70,279.90" stroke="#ccccdc" stroke-width="0.93" fill="none"/><text x="1231.18" y="284.00" font-size="8.4" fill="#ccccdc" stroke="#ccccdc" stroke-width="0.15" letter-spacing="-0.25">78:8000</text>
<rect x="1183" y="293.90" width="9" height="2.2" rx="1.1" fill="#fade2a"/>
<path d="M1198.87,292.22 V298.00 M1199.15,292.41 L1197.23,293.90" stroke="#ccccdc" stroke-width="0.93" fill="none"/><text x="1199.71" y="298.00" font-size="8.4" fill="#ccccdc" stroke="#ccccdc" stroke-width="0.15" letter-spacing="-0.25">0.244.0.</text><path d="M1230.34,292.22 V298.00 M1230.62,292.41 L1228.70,293.90" stroke="#ccccdc" stroke-width="0.93" fill="none"/><text x="1231.18" y="298.00" font-size="8.4" fill="#ccccdc" stroke="#ccccdc" stroke-width="0.15" letter-spacing="-0.25">79:8000</text>
<line x1="20" y1="592.70" x2="537" y2="592.70" stroke="rgba(204,204,220,0.045)" stroke-width="1"/>
<text x="12.53" y="595.70" font-size="8.4" fill="#ccccdc" stroke="#ccccdc" stroke-width="0.15" letter-spacing="0.0">0</text>
<line x1="20" y1="573.97" x2="537" y2="573.97" stroke="rgba(204,204,220,0.045)" stroke-width="1"/>
<text x="12.53" y="576.97" font-size="8.4" fill="#ccccdc" stroke="#ccccdc" stroke-width="0.15" letter-spacing="0.0">2</text>
<line x1="20" y1="555.24" x2="537" y2="555.24" stroke="rgba(204,204,220,0.045)" stroke-width="1"/>
<text x="12.53" y="558.24" font-size="8.4" fill="#ccccdc" stroke="#ccccdc" stroke-width="0.15" letter-spacing="0.0">4</text>
<line x1="20" y1="536.51" x2="537" y2="536.51" stroke="rgba(204,204,220,0.045)" stroke-width="1"/>
<text x="12.53" y="539.51" font-size="8.4" fill="#ccccdc" stroke="#ccccdc" stroke-width="0.15" letter-spacing="0.0">6</text>
<line x1="20" y1="517.79" x2="537" y2="517.79" stroke="rgba(204,204,220,0.045)" stroke-width="1"/>
<text x="12.53" y="520.79" font-size="8.4" fill="#ccccdc" stroke="#ccccdc" stroke-width="0.15" letter-spacing="0.0">8</text>
<line x1="20" y1="499.06" x2="537" y2="499.06" stroke="rgba(204,204,220,0.045)" stroke-width="1"/>
<path d="M11.44,496.28 V502.06 M11.72,496.47 L9.80,497.96" stroke="#ccccdc" stroke-width="0.93" fill="none"/><text x="12.53" y="502.06" font-size="8.4" fill="#ccccdc" stroke="#ccccdc" stroke-width="0.15" letter-spacing="0.0">0</text>
<line x1="20" y1="480.33" x2="537" y2="480.33" stroke="rgba(204,204,220,0.045)" stroke-width="1"/>
<path d="M11.44,477.55 V483.33 M11.72,477.74 L9.80,479.23" stroke="#ccccdc" stroke-width="0.93" fill="none"/><text x="12.53" y="483.33" font-size="8.4" fill="#ccccdc" stroke="#ccccdc" stroke-width="0.15" letter-spacing="0.0">2</text>
<line x1="20" y1="461.60" x2="537" y2="461.60" stroke="rgba(204,204,220,0.045)" stroke-width="1"/>
<path d="M11.44,458.82 V464.60 M11.72,459.01 L9.80,460.50" stroke="#ccccdc" stroke-width="0.93" fill="none"/><text x="12.53" y="464.60" font-size="8.4" fill="#ccccdc" stroke="#ccccdc" stroke-width="0.15" letter-spacing="0.0">4</text>
<line x1="94.30" y1="462" x2="94.30" y2="593" stroke="rgba(204,204,220,0.045)" stroke-width="1"/>
<path d="M86.62,597.95 V603.80 M86.92,598.15 L84.97,599.65" stroke="#ccccdc" stroke-width="0.99" fill="none"/><text x="87.73" y="603.8" font-size="8.5" fill="#ccccdc" stroke="#ccccdc" stroke-width="0.2" letter-spacing="0.0">4:00</text>
<line x1="266.40" y1="462" x2="266.40" y2="593" stroke="rgba(204,204,220,0.045)" stroke-width="1"/>
<path d="M258.72,597.95 V603.80 M259.02,598.15 L257.07,599.65" stroke="#ccccdc" stroke-width="0.99" fill="none"/><text x="259.83" y="603.8" font-size="8.5" fill="#ccccdc" stroke="#ccccdc" stroke-width="0.2" letter-spacing="0.0">4:05</text>
<line x1="438.60" y1="462" x2="438.60" y2="593" stroke="rgba(204,204,220,0.045)" stroke-width="1"/>
<path d="M431.59,597.95 V603.80 M431.88,598.15 L429.93,599.65" stroke="#ccccdc" stroke-width="0.99" fill="none"/><text x="432.69" y="603.8" font-size="8.5" fill="#ccccdc" stroke="#ccccdc" stroke-width="0.2" letter-spacing="0.0">4:</text><path d="M442.08,597.95 V603.80 M442.37,598.15 L440.42,599.65" stroke="#ccccdc" stroke-width="0.99" fill="none"/><text x="443.18" y="603.8" font-size="8.5" fill="#ccccdc" stroke="#ccccdc" stroke-width="0.2" letter-spacing="0.0">0</text>
<path d="M214.81,593.00 L232.02,574.27 L249.23,593.00 L266.44,583.64 L283.65,480.63 L300.86,555.54 L318.07,593.00 M507.38,593.00 L524.59,583.64 " fill="none" stroke="#73bf69" stroke-width="0.8" stroke-linejoin="round"/>
<path d="M25.50,593.00 L42.71,593.00 L59.92,593.00 L77.13,593.00 L94.34,593.00 L111.55,593.00 L128.76,593.00 L145.97,593.00 L163.18,593.00 L180.39,593.00 L197.60,593.00 L214.81,593.00 L232.02,593.00 L249.23,593.00 L266.44,574.27 L283.65,574.27 L300.86,593.00 L318.07,593.00 L335.28,593.00 L352.49,593.00 L369.70,593.00 L386.91,593.00 L404.12,593.00 L421.33,593.00 L438.54,593.00 L455.75,593.00 L472.96,593.00 L490.17,593.00 L507.38,593.00 L524.59,593.00 " fill="none" stroke="#fade2a" stroke-width="0.8" stroke-linejoin="round"/>
<circle cx="25.50" cy="593.00" r="1.85" fill="#73bf69"/>
<circle cx="42.71" cy="593.00" r="1.85" fill="#73bf69"/>
<circle cx="59.92" cy="593.00" r="1.85" fill="#73bf69"/>
<circle cx="77.13" cy="593.00" r="1.85" fill="#73bf69"/>
<circle cx="94.34" cy="593.00" r="1.85" fill="#73bf69"/>
<circle cx="111.55" cy="593.00" r="1.85" fill="#73bf69"/>
<circle cx="128.76" cy="593.00" r="1.85" fill="#73bf69"/>
<circle cx="145.97" cy="593.00" r="1.85" fill="#73bf69"/>
<circle cx="163.18" cy="593.00" r="1.85" fill="#73bf69"/>
<circle cx="180.39" cy="593.00" r="1.85" fill="#73bf69"/>
<circle cx="197.60" cy="593.00" r="1.85" fill="#73bf69"/>
<circle cx="214.81" cy="593.00" r="1.85" fill="#73bf69"/>
<circle cx="232.02" cy="574.27" r="1.85" fill="#73bf69"/>
<circle cx="249.23" cy="593.00" r="1.85" fill="#73bf69"/>
<circle cx="266.44" cy="583.64" r="1.85" fill="#73bf69"/>
<circle cx="283.65" cy="480.63" r="1.85" fill="#73bf69"/>
<circle cx="300.86" cy="555.54" r="1.85" fill="#73bf69"/>
<circle cx="318.07" cy="593.00" r="1.85" fill="#73bf69"/>
<circle cx="335.28" cy="593.00" r="1.85" fill="#73bf69"/>
<circle cx="352.49" cy="593.00" r="1.85" fill="#73bf69"/>
<circle cx="369.70" cy="593.00" r="1.85" fill="#73bf69"/>
<circle cx="386.91" cy="593.00" r="1.85" fill="#73bf69"/>
<circle cx="404.12" cy="593.00" r="1.85" fill="#73bf69"/>
<circle cx="421.33" cy="593.00" r="1.85" fill="#73bf69"/>
<circle cx="438.54" cy="593.00" r="1.85" fill="#73bf69"/>
<circle cx="455.75" cy="593.00" r="1.85" fill="#73bf69"/>
<circle cx="472.96" cy="593.00" r="1.85" fill="#73bf69"/>
<circle cx="490.17" cy="593.00" r="1.85" fill="#73bf69"/>
<circle cx="507.38" cy="593.00" r="1.85" fill="#73bf69"/>
<circle cx="524.59" cy="583.64" r="1.85" fill="#73bf69"/>
<circle cx="25.50" cy="593.00" r="1.85" fill="#fade2a"/>
<circle cx="42.71" cy="593.00" r="1.85" fill="#fade2a"/>
<circle cx="59.92" cy="593.00" r="1.85" fill="#fade2a"/>
<circle cx="77.13" cy="593.00" r="1.85" fill="#fade2a"/>
<circle cx="94.34" cy="593.00" r="1.85" fill="#fade2a"/>
<circle cx="111.55" cy="593.00" r="1.85" fill="#fade2a"/>
<circle cx="128.76" cy="593.00" r="1.85" fill="#fade2a"/>
<circle cx="145.97" cy="593.00" r="1.85" fill="#fade2a"/>
<circle cx="163.18" cy="593.00" r="1.85" fill="#fade2a"/>
<circle cx="180.39" cy="593.00" r="1.85" fill="#fade2a"/>
<circle cx="197.60" cy="593.00" r="1.85" fill="#fade2a"/>
<circle cx="214.81" cy="593.00" r="1.85" fill="#fade2a"/>
<circle cx="232.02" cy="593.00" r="1.85" fill="#fade2a"/>
<circle cx="249.23" cy="593.00" r="1.85" fill="#fade2a"/>
<circle cx="266.44" cy="574.27" r="1.85" fill="#fade2a"/>
<circle cx="283.65" cy="574.27" r="1.85" fill="#fade2a"/>
<circle cx="300.86" cy="593.00" r="1.85" fill="#fade2a"/>
<circle cx="318.07" cy="593.00" r="1.85" fill="#fade2a"/>
<circle cx="335.28" cy="593.00" r="1.85" fill="#fade2a"/>
<circle cx="352.49" cy="593.00" r="1.85" fill="#fade2a"/>
<circle cx="369.70" cy="593.00" r="1.85" fill="#fade2a"/>
<circle cx="386.91" cy="593.00" r="1.85" fill="#fade2a"/>
<circle cx="404.12" cy="593.00" r="1.85" fill="#fade2a"/>
<circle cx="421.33" cy="593.00" r="1.85" fill="#fade2a"/>
<circle cx="438.54" cy="593.00" r="1.85" fill="#fade2a"/>
<circle cx="455.75" cy="593.00" r="1.85" fill="#fade2a"/>
<circle cx="472.96" cy="593.00" r="1.85" fill="#fade2a"/>
<circle cx="490.17" cy="593.00" r="1.85" fill="#fade2a"/>
<circle cx="507.38" cy="593.00" r="1.85" fill="#fade2a"/>
<circle cx="524.59" cy="593.00" r="1.85" fill="#fade2a"/>
<rect x="544" y="463.90" width="9" height="2.2" rx="1.1" fill="#73bf69"/>
<path d="M559.87,462.22 V468.00 M560.15,462.41 L558.23,463.90" stroke="#ccccdc" stroke-width="0.93" fill="none"/><text x="560.71" y="468.00" font-size="8.4" fill="#ccccdc" stroke="#ccccdc" stroke-width="0.15" letter-spacing="-0.25">0.244.0.</text><path d="M591.34,462.22 V468.00 M591.62,462.41 L589.70,463.90" stroke="#ccccdc" stroke-width="0.93" fill="none"/><text x="592.18" y="468.00" font-size="8.4" fill="#ccccdc" stroke="#ccccdc" stroke-width="0.15" letter-spacing="-0.25">78:8000</text>
<rect x="544" y="477.90" width="9" height="2.2" rx="1.1" fill="#fade2a"/>
<path d="M559.87,476.22 V482.00 M560.15,476.41 L558.23,477.90" stroke="#ccccdc" stroke-width="0.93" fill="none"/><text x="560.71" y="482.00" font-size="8.4" fill="#ccccdc" stroke="#ccccdc" stroke-width="0.15" letter-spacing="-0.25">0.244.0.</text><path d="M591.34,476.22 V482.00 M591.62,476.41 L589.70,477.90" stroke="#ccccdc" stroke-width="0.93" fill="none"/><text x="592.18" y="482.00" font-size="8.4" fill="#ccccdc" stroke="#ccccdc" stroke-width="0.15" letter-spacing="-0.25">79:8000</text>
<line x1="666" y1="592.70" x2="1176" y2="592.70" stroke="rgba(204,204,220,0.045)" stroke-width="1"/>
<text x="646.85" y="595.70" font-size="8.4" fill="#ccccdc" stroke="#ccccdc" stroke-width="0.15" letter-spacing="0.0">0.26</text>
<line x1="666" y1="573.97" x2="1176" y2="573.97" stroke="rgba(204,204,220,0.045)" stroke-width="1"/>
<text x="646.85" y="576.97" font-size="8.4" fill="#ccccdc" stroke="#ccccdc" stroke-width="0.15" letter-spacing="0.0">0.28</text>
<line x1="666" y1="555.24" x2="1176" y2="555.24" stroke="rgba(204,204,220,0.045)" stroke-width="1"/>
<text x="651.52" y="558.24" font-size="8.4" fill="#ccccdc" stroke="#ccccdc" stroke-width="0.15" letter-spacing="0.0">0.3</text>
<line x1="666" y1="536.51" x2="1176" y2="536.51" stroke="rgba(204,204,220,0.045)" stroke-width="1"/>
<text x="646.85" y="539.51" font-size="8.4" fill="#ccccdc" stroke="#ccccdc" stroke-width="0.15" letter-spacing="0.0">0.32</text>
<line x1="666" y1="517.79" x2="1176" y2="517.79" stroke="rgba(204,204,220,0.045)" stroke-width="1"/>
<text x="646.85" y="520.79" font-size="8.4" fill="#ccccdc" stroke="#ccccdc" stroke-width="0.15" letter-spacing="0.0">0.34</text>
<line x1="666" y1="499.06" x2="1176" y2="499.06" stroke="rgba(204,204,220,0.045)" stroke-width="1"/>
<text x="646.85" y="502.06" font-size="8.4" fill="#ccccdc" stroke="#ccccdc" stroke-width="0.15" letter-spacing="0.0">0.36</text>
<line x1="666" y1="480.33" x2="1176" y2="480.33" stroke="rgba(204,204,220,0.045)" stroke-width="1"/>
<text x="646.85" y="483.33" font-size="8.4" fill="#ccccdc" stroke="#ccccdc" stroke-width="0.15" letter-spacing="0.0">0.38</text>
<line x1="666" y1="461.60" x2="1176" y2="461.60" stroke="rgba(204,204,220,0.045)" stroke-width="1"/>
<text x="651.52" y="464.60" font-size="8.4" fill="#ccccdc" stroke="#ccccdc" stroke-width="0.15" letter-spacing="0.0">0.4</text>
<line x1="739.40" y1="462" x2="739.40" y2="593" stroke="rgba(204,204,220,0.045)" stroke-width="1"/>
<path d="M731.72,597.95 V603.80 M732.02,598.15 L730.07,599.65" stroke="#ccccdc" stroke-width="0.99" fill="none"/><text x="732.83" y="603.8" font-size="8.5" fill="#ccccdc" stroke="#ccccdc" stroke-width="0.2" letter-spacing="0.0">4:00</text>
<line x1="909.20" y1="462" x2="909.20" y2="593" stroke="rgba(204,204,220,0.045)" stroke-width="1"/>
<path d="M901.52,597.95 V603.80 M901.82,598.15 L899.87,599.65" stroke="#ccccdc" stroke-width="0.99" fill="none"/><text x="902.63" y="603.8" font-size="8.5" fill="#ccccdc" stroke="#ccccdc" stroke-width="0.2" letter-spacing="0.0">4:05</text>
<line x1="1078.80" y1="462" x2="1078.80" y2="593" stroke="rgba(204,204,220,0.045)" stroke-width="1"/>
<path d="M1071.79,597.95 V603.80 M1072.08,598.15 L1070.13,599.65" stroke="#ccccdc" stroke-width="0.99" fill="none"/><text x="1072.89" y="603.8" font-size="8.5" fill="#ccccdc" stroke="#ccccdc" stroke-width="0.2" letter-spacing="0.0">4:</text><path d="M1082.28,597.95 V603.80 M1082.57,598.15 L1080.62,599.65" stroke="#ccccdc" stroke-width="0.99" fill="none"/><text x="1083.38" y="603.8" font-size="8.5" fill="#ccccdc" stroke="#ccccdc" stroke-width="0.2" letter-spacing="0.0">0</text>
<path d="M672.30,519.49 L689.26,519.49 L706.22,519.49 L723.18,519.49 L740.14,519.49 L757.10,519.49 L774.06,519.49 L791.02,519.49 L807.98,519.49 L824.94,519.49 L841.90,532.81 L858.86,559.28 L875.82,526.43 L892.78,508.17 L909.74,534.03 L926.70,555.02 L943.66,556.24 L960.62,567.19 L977.58,567.19 L994.54,567.19 L1011.50,575.40 L1028.46,551.67 L1045.42,541.94 L1062.38,529.77 L1079.34,534.94 L1096.30,527.34 L1113.26,512.74 L1130.22,506.96 L1147.18,499.35 L1164.14,507.87 " fill="none" stroke="#73bf69" stroke-width="0.8" stroke-linejoin="round"/>
<path d="M672.30,542.00 L689.26,542.00 L706.22,542.00 L723.18,542.00 L740.14,542.00 L757.10,542.00 L774.06,542.00 L791.02,542.00 L807.98,542.00 L824.94,542.00 L841.90,542.00 L858.86,577.53 L875.82,504.83 L892.78,515.78 L909.74,540.11 L926.70,512.74 L943.66,515.48 L960.62,515.48 L977.58,515.48 L994.54,515.48 L1011.50,515.48 L1028.46,518.82 L1045.42,513.04 L1062.38,505.44 L1079.34,506.65 L1096.30,492.36 L1113.26,486.58 L1130.22,479.58 L1147.18,483.54 L1164.14,481.41 " fill="none" stroke="#fade2a" stroke-width="0.8" stroke-linejoin="round"/>
<circle cx="672.30" cy="519.49" r="1.85" fill="#73bf69"/>
<circle cx="689.26" cy="519.49" r="1.85" fill="#73bf69"/>
<circle cx="706.22" cy="519.49" r="1.85" fill="#73bf69"/>
<circle cx="723.18" cy="519.49" r="1.85" fill="#73bf69"/>
<circle cx="740.14" cy="519.49" r="1.85" fill="#73bf69"/>
<circle cx="757.10" cy="519.49" r="1.85" fill="#73bf69"/>
<circle cx="774.06" cy="519.49" r="1.85" fill="#73bf69"/>
<circle cx="791.02" cy="519.49" r="1.85" fill="#73bf69"/>
<circle cx="807.98" cy="519.49" r="1.85" fill="#73bf69"/>
<circle cx="824.94" cy="519.49" r="1.85" fill="#73bf69"/>
<circle cx="841.90" cy="532.81" r="1.85" fill="#73bf69"/>
<circle cx="858.86" cy="559.28" r="1.85" fill="#73bf69"/>
<circle cx="875.82" cy="526.43" r="1.85" fill="#73bf69"/>
<circle cx="892.78" cy="508.17" r="1.85" fill="#73bf69"/>
<circle cx="909.74" cy="534.03" r="1.85" fill="#73bf69"/>
<circle cx="926.70" cy="555.02" r="1.85" fill="#73bf69"/>
<circle cx="943.66" cy="556.24" r="1.85" fill="#73bf69"/>
<circle cx="960.62" cy="567.19" r="1.85" fill="#73bf69"/>
<circle cx="977.58" cy="567.19" r="1.85" fill="#73bf69"/>
<circle cx="994.54" cy="567.19" r="1.85" fill="#73bf69"/>
<circle cx="1011.50" cy="575.40" r="1.85" fill="#73bf69"/>
<circle cx="1028.46" cy="551.67" r="1.85" fill="#73bf69"/>
<circle cx="1045.42" cy="541.94" r="1.85" fill="#73bf69"/>
<circle cx="1062.38" cy="529.77" r="1.85" fill="#73bf69"/>
<circle cx="1079.34" cy="534.94" r="1.85" fill="#73bf69"/>
<circle cx="1096.30" cy="527.34" r="1.85" fill="#73bf69"/>
<circle cx="1113.26" cy="512.74" r="1.85" fill="#73bf69"/>
<circle cx="1130.22" cy="506.96" r="1.85" fill="#73bf69"/>
<circle cx="1147.18" cy="499.35" r="1.85" fill="#73bf69"/>
<circle cx="1164.14" cy="507.87" r="1.85" fill="#73bf69"/>
<circle cx="672.30" cy="542.00" r="1.85" fill="#fade2a"/>
<circle cx="689.26" cy="542.00" r="1.85" fill="#fade2a"/>
<circle cx="706.22" cy="542.00" r="1.85" fill="#fade2a"/>
<circle cx="723.18" cy="542.00" r="1.85" fill="#fade2a"/>
<circle cx="740.14" cy="542.00" r="1.85" fill="#fade2a"/>
<circle cx="757.10" cy="542.00" r="1.85" fill="#fade2a"/>
<circle cx="774.06" cy="542.00" r="1.85" fill="#fade2a"/>
<circle cx="791.02" cy="542.00" r="1.85" fill="#fade2a"/>
<circle cx="807.98" cy="542.00" r="1.85" fill="#fade2a"/>
<circle cx="824.94" cy="542.00" r="1.85" fill="#fade2a"/>
<circle cx="841.90" cy="542.00" r="1.85" fill="#fade2a"/>
<circle cx="858.86" cy="577.53" r="1.85" fill="#fade2a"/>
<circle cx="875.82" cy="504.83" r="1.85" fill="#fade2a"/>
<circle cx="892.78" cy="515.78" r="1.85" fill="#fade2a"/>
<circle cx="909.74" cy="540.11" r="1.85" fill="#fade2a"/>
<circle cx="926.70" cy="512.74" r="1.85" fill="#fade2a"/>
<circle cx="943.66" cy="515.48" r="1.85" fill="#fade2a"/>
<circle cx="960.62" cy="515.48" r="1.85" fill="#fade2a"/>
<circle cx="977.58" cy="515.48" r="1.85" fill="#fade2a"/>
<circle cx="994.54" cy="515.48" r="1.85" fill="#fade2a"/>
<circle cx="1011.50" cy="515.48" r="1.85" fill="#fade2a"/>
<circle cx="1028.46" cy="518.82" r="1.85" fill="#fade2a"/>
<circle cx="1045.42" cy="513.04" r="1.85" fill="#fade2a"/>
<circle cx="1062.38" cy="505.44" r="1.85" fill="#fade2a"/>
<circle cx="1079.34" cy="506.65" r="1.85" fill="#fade2a"/>
<circle cx="1096.30" cy="492.36" r="1.85" fill="#fade2a"/>
<circle cx="1113.26" cy="486.58" r="1.85" fill="#fade2a"/>
<circle cx="1130.22" cy="479.58" r="1.85" fill="#fade2a"/>
<circle cx="1147.18" cy="483.54" r="1.85" fill="#fade2a"/>
<circle cx="1164.14" cy="481.41" r="1.85" fill="#fade2a"/>
<rect x="1183" y="463.90" width="9" height="2.2" rx="1.1" fill="#73bf69"/>
<path d="M1198.87,462.22 V468.00 M1199.15,462.41 L1197.23,463.90" stroke="#ccccdc" stroke-width="0.93" fill="none"/><text x="1199.71" y="468.00" font-size="8.4" fill="#ccccdc" stroke="#ccccdc" stroke-width="0.15" letter-spacing="-0.25">0.244.0.</text><path d="M1230.34,462.22 V468.00 M1230.62,462.41 L1228.70,463.90" stroke="#ccccdc" stroke-width="0.93" fill="none"/><text x="1231.18" y="468.00" font-size="8.4" fill="#ccccdc" stroke="#ccccdc" stroke-width="0.15" letter-spacing="-0.25">78:8000</text>
<rect x="1183" y="477.90" width="9" height="2.2" rx="1.1" fill="#fade2a"/>
<path d="M1198.87,476.22 V482.00 M1199.15,476.41 L1197.23,477.90" stroke="#ccccdc" stroke-width="0.93" fill="none"/><text x="1199.71" y="482.00" font-size="8.4" fill="#ccccdc" stroke="#ccccdc" stroke-width="0.15" letter-spacing="-0.25">0.244.0.</text><path d="M1230.34,476.22 V482.00 M1230.62,476.41 L1228.70,477.90" stroke="#ccccdc" stroke-width="0.93" fill="none"/><text x="1231.18" y="482.00" font-size="8.4" fill="#ccccdc" stroke="#ccccdc" stroke-width="0.15" letter-spacing="-0.25">79:8000</text>
</svg>
</body></html>
